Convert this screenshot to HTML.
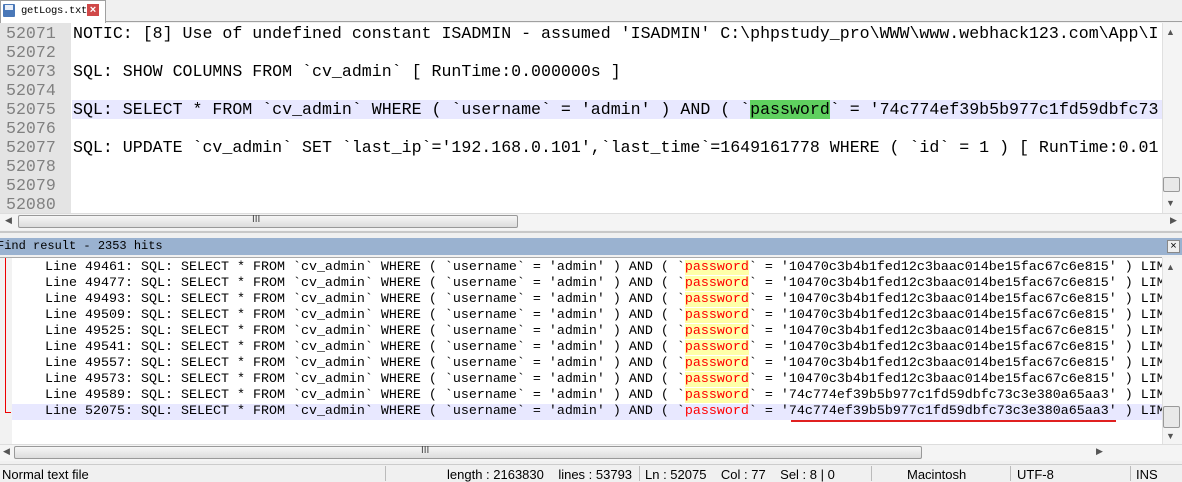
<!DOCTYPE html>
<html><head><meta charset="utf-8"><style>
*{margin:0;padding:0;box-sizing:border-box}
body{width:1182px;height:481px;overflow:hidden;background:#f0f0f0;position:relative;font-family:"Liberation Sans",sans-serif}
.abs{position:absolute}
.ed{font-family:"Liberation Mono",monospace;font-size:16.6px;white-space:pre;color:#000}
.rs{font-family:"Liberation Mono",monospace;font-size:13.33px;white-space:pre;color:#000}
.ln{color:#808080}
.pw{color:#f00;background:#ffffa8}
.sb{font-size:13px;color:#000;white-space:pre}
</style></head><body>
<!-- tab bar -->
<div class="abs" style="left:0;top:0;width:1182px;height:22px;background:#f0f0f0;border-bottom:1px solid #a0a0a0"></div>
<div class="abs" style="left:0;top:0;width:106px;height:23px;background:#fff;border:1px solid #a0a0a0;border-bottom:none"></div>
<div class="abs" style="left:3px;top:4px;width:12px;height:13px;background:#4a78b8;border-radius:1px"></div>
<div class="abs" style="left:5px;top:5px;width:8px;height:5px;background:#e8eef8"></div>
<div class="abs" style="left:21px;top:5px;font-family:'Liberation Mono',monospace;font-size:10.5px;letter-spacing:-0.3px">getLogs.txt</div>
<div class="abs" style="left:87px;top:4px;width:12px;height:12px;background:#d04848;color:#fff;font-size:11px;line-height:12px;text-align:center;font-weight:bold">×</div>
<!-- editor -->
<div class="abs" style="left:0;top:23px;width:1162px;height:190px;background:#fff"></div>
<div class="abs" style="left:0;top:23px;width:71px;height:190px;background:#e4e4e4"></div>
<div class="abs" style="left:72px;top:100px;width:1090px;height:19px;background:#e8e8ff"></div>
<div class="abs ed ln" style="left:6px;top:24px;line-height:19px">52071
52072
52073
52074
52075
52076
52077
52078
52079
52080</div>
<div class="abs ed" style="left:73px;top:24px;line-height:19px;width:1089px;overflow:hidden">NOTIC: [8] Use of undefined constant ISADMIN - assumed 'ISADMIN' C:\phpstudy_pro\WWW\www.webhack123.com\App\I

SQL: SHOW COLUMNS FROM `cv_admin` [ RunTime:0.000000s ]

SQL: SELECT * FROM `cv_admin` WHERE ( `username` = 'admin' ) AND ( `<span style="background:#5fd05f">password</span>` = '74c774ef39b5b977c1fd59dbfc73

SQL: UPDATE `cv_admin` SET `last_ip`='192.168.0.101',`last_time`=1649161778 WHERE ( `id` = 1 ) [ RunTime:0.01</div>
<!-- vscroll top -->
<div class="abs" style="left:1162px;top:23px;width:20px;height:190px;background:#f4f4f4;border-left:1px solid #e0e0e0"></div>
<div class="abs" style="left:1166px;top:27px;font-size:9px;color:#555">▲</div>
<div class="abs" style="left:1163px;top:177px;width:17px;height:15px;background:#e8e8e8;border:1px solid #999;border-radius:2px"></div>
<div class="abs" style="left:1166px;top:198px;font-size:9px;color:#555">▼</div>
<!-- hscroll top -->
<div class="abs" style="left:0;top:213px;width:1182px;height:17px;background:#f4f4f4;border-top:1px solid #ddd"></div>
<div class="abs" style="left:18px;top:215px;width:500px;height:13px;background:linear-gradient(#f6f6f6,#dcdcdc);border:1px solid #999;border-radius:2px"></div>
<div class="abs" style="left:252px;top:214px;font-size:10px;color:#444">III</div>
<div class="abs" style="left:5px;top:215px;font-size:9px;color:#555">◀</div>
<div class="abs" style="left:1170px;top:215px;font-size:9px;color:#555">▶</div>
<div class="abs" style="left:0;top:231px;width:1182px;height:2px;background:#c8c8c8"></div>
<!-- find header -->
<div class="abs" style="left:0;top:238px;width:1182px;height:17px;background:#9ab2d0"></div>
<div class="abs" style="left:-3px;top:239px;font-family:'Liberation Mono',monospace;font-size:12px">Find result - 2353 hits</div>
<div class="abs" style="left:1167px;top:240px;width:13px;height:13px;background:#eee;border:1px solid #888;font-size:11px;line-height:11px;text-align:center">×</div>
<!-- results -->
<div class="abs" style="left:0;top:257px;width:1162px;height:187px;background:#fff;border-top:1px solid #aaa"></div>
<div class="abs" style="left:0;top:258px;width:12px;height:186px;background:#f2f2f2"></div>
<div class="abs" style="left:5px;top:258px;width:1px;height:155px;background:#e00"></div>
<div class="abs" style="left:5px;top:412px;width:6px;height:1px;background:#e00"></div>
<div class="abs" style="left:12px;top:404px;width:1150px;height:16px;background:#e8e8ff"></div>
<div class="abs rs" style="left:45px;top:260px;line-height:16px;width:1117px;overflow:hidden">Line 49461: SQL: SELECT * FROM `cv_admin` WHERE ( `username` = 'admin' ) AND ( `<span class="pw">password</span>` = '10470c3b4b1fed12c3baac014be15fac67c6e815' ) LIM
Line 49477: SQL: SELECT * FROM `cv_admin` WHERE ( `username` = 'admin' ) AND ( `<span class="pw">password</span>` = '10470c3b4b1fed12c3baac014be15fac67c6e815' ) LIM
Line 49493: SQL: SELECT * FROM `cv_admin` WHERE ( `username` = 'admin' ) AND ( `<span class="pw">password</span>` = '10470c3b4b1fed12c3baac014be15fac67c6e815' ) LIM
Line 49509: SQL: SELECT * FROM `cv_admin` WHERE ( `username` = 'admin' ) AND ( `<span class="pw">password</span>` = '10470c3b4b1fed12c3baac014be15fac67c6e815' ) LIM
Line 49525: SQL: SELECT * FROM `cv_admin` WHERE ( `username` = 'admin' ) AND ( `<span class="pw">password</span>` = '10470c3b4b1fed12c3baac014be15fac67c6e815' ) LIM
Line 49541: SQL: SELECT * FROM `cv_admin` WHERE ( `username` = 'admin' ) AND ( `<span class="pw">password</span>` = '10470c3b4b1fed12c3baac014be15fac67c6e815' ) LIM
Line 49557: SQL: SELECT * FROM `cv_admin` WHERE ( `username` = 'admin' ) AND ( `<span class="pw">password</span>` = '10470c3b4b1fed12c3baac014be15fac67c6e815' ) LIM
Line 49573: SQL: SELECT * FROM `cv_admin` WHERE ( `username` = 'admin' ) AND ( `<span class="pw">password</span>` = '10470c3b4b1fed12c3baac014be15fac67c6e815' ) LIM
Line 49589: SQL: SELECT * FROM `cv_admin` WHERE ( `username` = 'admin' ) AND ( `<span class="pw">password</span>` = '74c774ef39b5b977c1fd59dbfc73c3e380a65aa3' ) LIM
Line 52075: SQL: SELECT * FROM `cv_admin` WHERE ( `username` = 'admin' ) AND ( `<span style="color:#f00">password</span>` = '74c774ef39b5b977c1fd59dbfc73c3e380a65aa3' ) LIM</div>
<div class="abs" style="left:791px;top:420px;width:325px;height:2px;background:#e02020"></div>
<!-- vscroll results -->
<div class="abs" style="left:1162px;top:258px;width:20px;height:186px;background:#f4f4f4;border-left:1px solid #e0e0e0"></div>
<div class="abs" style="left:1166px;top:262px;font-size:9px;color:#555">▲</div>
<div class="abs" style="left:1163px;top:406px;width:17px;height:22px;background:#e8e8e8;border:1px solid #999;border-radius:2px"></div>
<div class="abs" style="left:1166px;top:431px;font-size:9px;color:#555">▼</div>
<!-- hscroll results -->
<div class="abs" style="left:0;top:444px;width:1182px;height:17px;background:#f4f4f4;border-top:1px solid #ddd"></div>
<div class="abs" style="left:14px;top:446px;width:908px;height:13px;background:linear-gradient(#f6f6f6,#dcdcdc);border:1px solid #999;border-radius:2px"></div>
<div class="abs" style="left:421px;top:445px;font-size:10px;color:#444">III</div>
<div class="abs" style="left:3px;top:446px;font-size:9px;color:#555">◀</div>
<div class="abs" style="left:1096px;top:446px;font-size:9px;color:#555">▶</div>
<!-- status bar -->
<div class="abs" style="left:0;top:464px;width:1182px;height:17px;background:#f0f0f0;border-top:1px solid #ccc"></div>
<div class="abs sb" style="left:2px;top:467px">Normal text file</div>
<div class="abs" style="left:385px;top:466px;width:1px;height:15px;background:#bbb"></div>
<div class="abs sb" style="left:447px;top:467px">length : 2163830    lines : 53793</div>
<div class="abs" style="left:639px;top:466px;width:1px;height:15px;background:#bbb"></div>
<div class="abs sb" style="left:645px;top:467px">Ln : 52075    Col : 77    Sel : 8 | 0</div>
<div class="abs" style="left:871px;top:466px;width:1px;height:15px;background:#bbb"></div>
<div class="abs sb" style="left:907px;top:467px">Macintosh</div>
<div class="abs" style="left:1010px;top:466px;width:1px;height:15px;background:#bbb"></div>
<div class="abs sb" style="left:1017px;top:467px">UTF-8</div>
<div class="abs" style="left:1130px;top:466px;width:1px;height:15px;background:#bbb"></div>
<div class="abs sb" style="left:1136px;top:467px">INS</div>
</body></html>
